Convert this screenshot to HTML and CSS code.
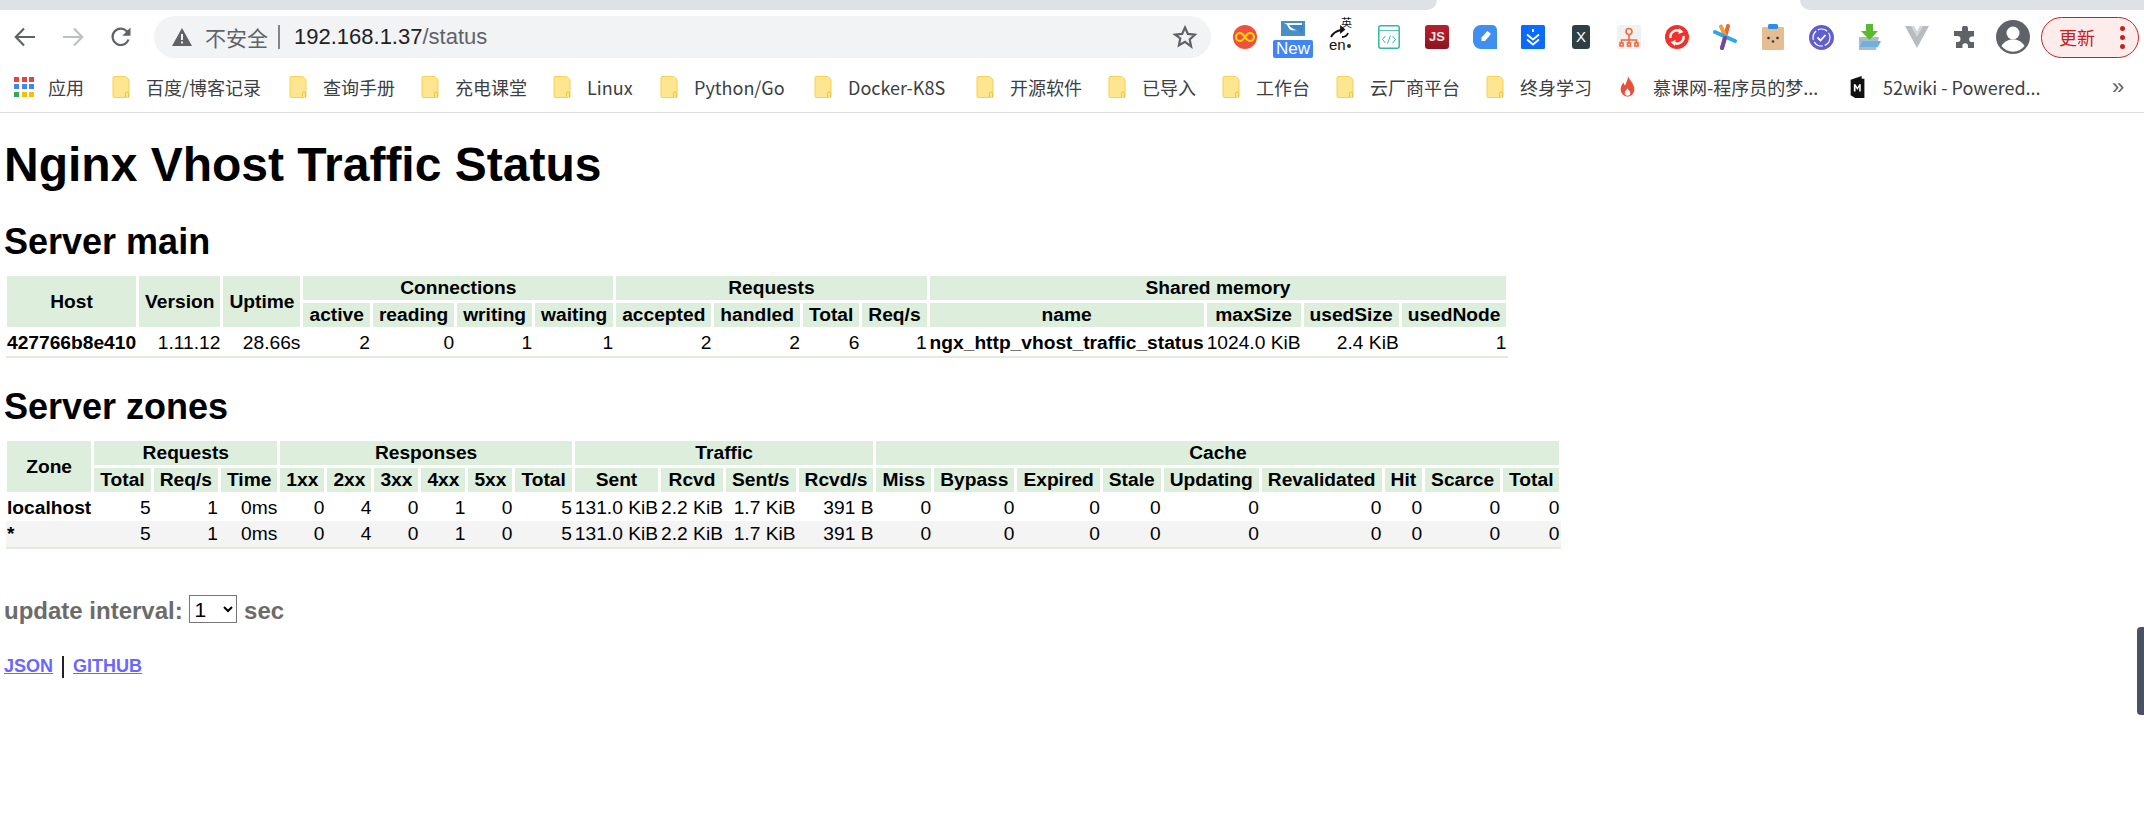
FILE: index.html
```html
<!DOCTYPE html>
<html lang="zh-CN">
<head>
    <meta charset="UTF-8">
    <meta name="viewport" content="width=device-width, initial-scale=1.0">
    <title>Nginx Vhost Traffic Status</title>
    <link rel="stylesheet" href="styles.css">
</head>
<body>
    <svg class="defs" width="0" height="0">
        <symbol id="folder" viewBox="0 0 18 22">
            <path d="M1.5 0.5h12l3.5 3v17a1 1 0 0 1-1 1h-14a1 1 0 0 1-1-1v-19a1 1 0 0 1 .5-1z" fill="#fee58f" stroke="#f8d053"/>
            <path d="M13.5 21.5v-4a1.5 1.5 0 0 1 3 0v4" fill="#fee58f" stroke="#f0c040"/>
        </symbol>
    </svg>

    <!-- tab strip -->
    <div class="tabstrip">
        <div class="tab-left"></div>
        <div class="tab-active"></div>
        <div class="tab-right"></div>
    </div>

    <!-- toolbar -->
    <div class="toolbar">
        <div class="nav-btn">
            <svg width="24" height="24" viewBox="0 0 24 24" fill="none" stroke="#5f6368" stroke-width="2.2"><path d="M22 12H3M11 3.5 2.8 12l8.2 8.5"/></svg>
        </div>
        <div class="nav-btn">
            <svg width="24" height="24" viewBox="0 0 24 24" fill="none" stroke="#bdc1c6" stroke-width="2.2"><path d="M2 12h19M13 3.5l8.2 8.5-8.2 8.5"/></svg>
        </div>
        <div class="nav-btn">
            <svg width="24" height="24" viewBox="0 0 24 24" fill="none"><path d="M19.5 14.5A8.2 8.2 0 1 1 17.8 6.2L20 8.5" stroke="#5f6368" stroke-width="2.2"/><path d="M21.5 2.5v8.2h-8.2z" fill="#5f6368"/></svg>
        </div>
        <div class="omnibox">
            <svg class="warn" width="20" height="18" viewBox="0 0 20 18"><path d="M10 0 20 18H0z" fill="#5f6368"/><path d="M9 6h2v6H9zM9 13.5h2v2H9z" fill="#f1f3f4"/></svg>
            <span class="insecure">不安全</span>
            <span class="divider"></span>
            <span class="url"><span class="host">192.168.1.37</span>/status</span>
            <svg class="star" width="24" height="24" viewBox="0 0 24 24" fill="none" stroke="#5f6368" stroke-width="2.2"><path d="M12 2.5l2.9 6.4 7 .8-5.200 4.700 1.400 6.900L12 16.800l-6.100 3.500 1.400-6.900L2.100 9.700l7-.8z"/></svg>
        </div>
        <div class="extensions">
            <div class="ext">
                <svg width="24" height="24" viewBox="0 0 24 24"><circle cx="12" cy="12" r="12" fill="#f2503f"/><path d="M12 12c-2-3-3.500-4-5-4a4 4 0 0 0 0 8c1.500 0 3-1 5-4s3.500-4 5-4a4 4 0 0 1 0 8c-1.500 0-3-1-5-4z" fill="none" stroke="#ffd60a" stroke-width="2.200"/></svg>
            </div>
            <div class="ext ext-new">
                <svg width="24" height="15" viewBox="0 0 24 15"><rect width="24" height="15" fill="#4a90c8"/><path d="M3 2h18v9c-3-3-8-1-11-2-3-1-2-5-7-7z" fill="#fff"/><path d="M8 4h14v10C18 8 12 10 8 4z" fill="#3f87c4"/></svg>
                <span class="new-badge">New</span>
            </div>
            <div class="ext ext-trans">
                <svg width="26" height="26" viewBox="0 0 26 26" fill="none" stroke="#111" stroke-width="1.800"><path d="M3 13C5 9 8 7 13 6M14 13c3 0 5-1 6-4"/><path d="M13 3l3 2.500-3 2.500z" fill="#111"/><circle cx="21" cy="22" r="2" fill="#333" stroke="none"/></svg>
                <span class="trans-zh">英</span>
                <span class="trans-en">en</span>
            </div>
            <div class="ext">
                <svg width="22" height="24" viewBox="0 0 22 24" fill="none" stroke="#35b6a0" stroke-width="1.500"><rect x=".8" y=".8" width="20.400" height="22.400" rx="2"/><path d="M1 5.500h20" stroke-width=".8"/><path d="M7.500 11l-3 3.500 3 3.500M14.500 11l3 3.500-3 3.500M12.500 10.500l-3 8" stroke-width="1"/></svg>
            </div>
            <div class="ext"><span class="ext-js">JS</span></div>
            <div class="ext">
                <svg width="24" height="24" viewBox="0 0 24 24"><path d="M8 0h11a5 5 0 0 1 5 5v19H8a8 8 0 0 1-8-8V8a8 8 0 0 1 8-8z" fill="#3f8ff0"/><path d="M14.500 6l3.500 3-6 7H8.500v-3.500z" fill="#fff"/></svg>
            </div>
            <div class="ext">
                <svg width="24" height="24" viewBox="0 0 24 24"><rect width="24" height="24" rx="1.500" fill="#0b6bff"/><path d="M12 4v3M6 9.500l6 5 6-5M6 14.500l6 5 6-5" fill="none" stroke="#fff" stroke-width="1.800"/></svg>
            </div>
            <div class="ext"><span class="ext-x">X</span></div>
            <div class="ext">
                <svg width="24" height="24" viewBox="0 0 24 24"><rect width="24" height="24" rx="2" fill="#f1f1f1"/><g fill="none" stroke="#f2683c" stroke-width="1.600"><circle cx="12" cy="6.500" r="3"/><path d="M12 9.500V15M4.500 18v-3h15v3M12 15v3"/><rect x="3" y="18" width="3" height="3"/><rect x="10.500" y="18" width="3" height="3"/><rect x="18" y="18" width="3" height="3"/></g></svg>
            </div>
            <div class="ext">
                <svg width="24" height="24" viewBox="0 0 24 24"><circle cx="12" cy="12" r="12" fill="#f0322d"/><path d="M5.500 13a6.500 6.500 0 0 1 10-6.500M18.500 11a6.500 6.500 0 0 1-10 6.500" fill="none" stroke="#fff" stroke-width="2.400"/><path d="M14 3l4.500 4-5 2zM10 21l-4.500-4 5-2z" fill="#fff"/></svg>
            </div>
            <div class="ext">
                <svg width="24" height="26" viewBox="0 0 24 26" stroke-width="4" stroke-linecap="round"><path d="M15 2 9 24" stroke="#e8663a"/><path d="M8 2.500 13 14" stroke="#f0a030"/><path d="M2 8l20 9" stroke="#2fa8e8"/><path d="M9 24l3-10" stroke="#6a4aa8"/></svg>
            </div>
            <div class="ext">
                <svg width="22" height="26" viewBox="0 0 22 26"><rect y="3" width="22" height="23" rx="1" fill="#e5bd93"/><rect x="6" width="10" height="5" rx="1.500" fill="#2f8fe8"/><circle cx="6.500" cy="14" r="1.300" fill="#333"/><circle cx="15.500" cy="14" r="1.300" fill="#333"/><circle cx="11" cy="17.500" r="1.200" fill="#333"/></svg>
            </div>
            <div class="ext">
                <svg width="25" height="25" viewBox="0 0 25 25"><circle cx="12.500" cy="12.500" r="12.500" fill="#5f5fd0"/><circle cx="12.500" cy="12.500" r="8.500" fill="none" stroke="#fff" stroke-width="1.200" stroke-dasharray="10 2"/><path d="M8.500 12.500l3 3 5-5.500" fill="none" stroke="#fff" stroke-width="1.800"/></svg>
            </div>
            <div class="ext">
                <svg width="24" height="26" viewBox="0 0 24 26"><path d="M2 13h20l-3 13H2z" fill="#a8bccc"/><path d="M5 17h19l-3 6H3z" fill="#6fb0e0"/><path d="M9 0h7v7h5l-8.500 9L4 7h5z" fill="#5cb82e"/></svg>
            </div>
            <div class="ext">
                <svg width="24" height="22" viewBox="0 0 24 22"><path d="M0 0h9l3 6 3-6h9L12 22z" fill="#b8bcbf"/><path d="M6 0h3l3 6 3-6h3l-6 11z" fill="#d4d6d8"/></svg>
            </div>
            <div class="ext">
                <svg width="22" height="22" viewBox="0 0 22 22"><path d="M8 2.500a3 3 0 0 1 6 0V5h6v5.500h-2a2.800 2.800 0 0 0 0 5.600h2V22h-6v-2a2.800 2.800 0 0 0-5.600 0v2H2v-6h1.500a3 3 0 0 0 0-6H0V5h8z" fill="#5f6368"/></svg>
            </div>
            <div class="ext">
                <svg width="34" height="34" viewBox="0 0 34 34"><circle cx="17" cy="17" r="17" fill="#5f6368"/><circle cx="17" cy="13" r="6.500" fill="#fff"/><path d="M5.500 26c3-5 7-6.500 11.500-6.500s8.500 1.500 11.500 6.500a14.500 14.500 0 0 1-23 0z" fill="#fff"/></svg>
            </div>
        </div>
        <div class="update-btn">
            <span class="update-label">更新</span>
            <span class="update-dots"><i></i><i></i><i></i></span>
        </div>
    </div>

    <!-- bookmarks -->
    <div class="bookmarks">
        <div class="bm bm-apps">
            <span class="apps-grid"><i class="r"></i><i class="r"></i><i class="r"></i><i class="b"></i><i class="b"></i><i class="b"></i><i class="g"></i><i class="y"></i><i class="y"></i></span>
            <span>应用</span>
        </div>
        <div class="bm"><svg class="folder"><use href="#folder"/></svg><span>百度/博客记录</span></div>
        <div class="bm"><svg class="folder"><use href="#folder"/></svg><span>查询手册</span></div>
        <div class="bm"><svg class="folder"><use href="#folder"/></svg><span>充电课堂</span></div>
        <div class="bm"><svg class="folder"><use href="#folder"/></svg><span>Linux</span></div>
        <div class="bm"><svg class="folder"><use href="#folder"/></svg><span>Python/Go</span></div>
        <div class="bm"><svg class="folder"><use href="#folder"/></svg><span>Docker-K8S</span></div>
        <div class="bm"><svg class="folder"><use href="#folder"/></svg><span>开源软件</span></div>
        <div class="bm"><svg class="folder"><use href="#folder"/></svg><span>已导入</span></div>
        <div class="bm"><svg class="folder"><use href="#folder"/></svg><span>工作台</span></div>
        <div class="bm"><svg class="folder"><use href="#folder"/></svg><span>云厂商平台</span></div>
        <div class="bm"><svg class="folder"><use href="#folder"/></svg><span>终身学习</span></div>
        <div class="bm">
            <svg class="folder" viewBox="0 0 18 24"><path d="M9 0c1 4 7 8 7 15a7.500 7.500 0 0 1-15 0c0-3 1-6 3.500-8 0 2 .5 3 1.500 3 1-3 3-6 3-10z" fill="#e8503a"/><path d="M8.500 13c0 2 3 3 3 5.500a3 3 0 0 1-6 0c0-2.500 2.500-3.500 3-5.500z" fill="#fff"/></svg>
            <span>慕课网-程序员的梦...</span>
        </div>
        <div class="bm">
            <svg class="folder" viewBox="0 0 18 24"><path d="M1 4l12-4v3h3v21H6l-5-3z" fill="#111"/><path d="M4.500 9h1.800l2 3.500 2-3.500h1.700v8h-1.700v-5l-2 3.300-2-3.300v5H4.500z" fill="#fff"/></svg>
            <span>52wiki - Powered...</span>
        </div>
        <div class="bm-more">»</div>
    </div>

    <!-- page -->
    <div class="page">
        <h1>Nginx Vhost Traffic Status</h1>

        <h2>Server main</h2>
        <table>
            <thead>
                <tr>
                    <th rowspan="2">Host</th>
                    <th rowspan="2">Version</th>
                    <th rowspan="2">Uptime</th>
                    <th colspan="4">Connections</th>
                    <th colspan="4">Requests</th>
                    <th colspan="4">Shared memory</th>
                </tr>
                <tr>
                    <th>active</th><th>reading</th><th>writing</th><th>waiting</th>
                    <th>accepted</th><th>handled</th><th>Total</th><th>Req/s</th>
                    <th>name</th><th>maxSize</th><th>usedSize</th><th>usedNode</th>
                </tr>
            </thead>
            <tbody>
                <tr>
                    <td class="name">427766b8e410</td>
                    <td>1.11.12</td><td>28.66s</td>
                    <td>2</td><td>0</td><td>1</td><td>1</td>
                    <td>2</td><td>2</td><td>6</td><td>1</td>
                    <td class="name">ngx_http_vhost_traffic_status</td>
                    <td>1024.0 KiB</td><td>2.4 KiB</td><td>1</td>
                </tr>
            </tbody>
        </table>

        <h2>Server zones</h2>
        <table>
            <thead>
                <tr>
                    <th rowspan="2">Zone</th>
                    <th colspan="3">Requests</th>
                    <th colspan="6">Responses</th>
                    <th colspan="4">Traffic</th>
                    <th colspan="9">Cache</th>
                </tr>
                <tr>
                    <th>Total</th><th>Req/s</th><th>Time</th>
                    <th>1xx</th><th>2xx</th><th>3xx</th><th>4xx</th><th>5xx</th><th>Total</th>
                    <th>Sent</th><th>Rcvd</th><th>Sent/s</th><th>Rcvd/s</th>
                    <th>Miss</th><th>Bypass</th><th>Expired</th><th>Stale</th><th>Updating</th><th>Revalidated</th><th>Hit</th><th>Scarce</th><th>Total</th>
                </tr>
            </thead>
            <tbody>
                <tr>
                    <td class="name">localhost</td>
                    <td>5</td><td>1</td><td>0ms</td>
                    <td>0</td><td>4</td><td>0</td><td>1</td><td>0</td><td>5</td>
                    <td>131.0 KiB</td><td>2.2 KiB</td><td>1.7 KiB</td><td>391 B</td>
                    <td>0</td><td>0</td><td>0</td><td>0</td><td>0</td><td>0</td><td>0</td><td>0</td><td>0</td>
                </tr>
                <tr class="odd">
                    <td class="name">*</td>
                    <td>5</td><td>1</td><td>0ms</td>
                    <td>0</td><td>4</td><td>0</td><td>1</td><td>0</td><td>5</td>
                    <td>131.0 KiB</td><td>2.2 KiB</td><td>1.7 KiB</td><td>391 B</td>
                    <td>0</td><td>0</td><td>0</td><td>0</td><td>0</td><td>0</td><td>0</td><td>0</td><td>0</td>
                </tr>
            </tbody>
        </table>

        <div class="interval">
            <label for="interval-select">update interval:</label>
            <select id="interval-select">
                <option>1</option>
                <option>2</option>
                <option>5</option>
            </select>
            <span>sec</span>
        </div>

        <div class="links">
            <a href="#">JSON</a>
            <span class="sep"></span>
            <a href="#">GITHUB</a>
        </div>
    </div>

    <div class="side-widget"></div>
</body>
</html>
```

FILE: styles.css
```css
html, body {
    margin: 0;
    padding: 0;
    height: 100%;
    overflow: hidden;
}
body {
    background: #fff;
    color: #000;
    font-family: "Liberation Sans", "Noto Sans CJK SC", sans-serif;
    font-size: 24px;
}
.defs {
    position: absolute;
}

/* tab strip */
.tabstrip {
    display: flex;
    height: 10px;
}
.tab-left, .tab-right {
    background: #dee1e6;
}
.tab-left {
    width: 1437px;
    border-bottom-right-radius: 10px;
}
.tab-active {
    width: 363px;
}
.tab-right {
    flex: 1;
    border-bottom-left-radius: 10px;
}

/* toolbar */
.toolbar {
    display: flex;
    align-items: center;
    height: 54px;
    padding: 0 5px 0 1px;
}
.nav-btn {
    width: 48px;
    display: flex;
    justify-content: center;
}
.omnibox {
    flex: 1;
    height: 42px;
    margin: 0 10px 0 9px;
    padding: 0 14px 0 18px;
    display: flex;
    align-items: center;
    background: #f1f3f4;
    border-radius: 21px;
}
.insecure {
    margin-left: 13px;
    font-size: 21px;
    color: #5f6368;
    font-family: "Noto Sans CJK SC", sans-serif;
}
.divider {
    width: 2px;
    height: 24px;
    margin: 0 14px 0 10px;
    background: #80868b;
}
.url {
    flex: 1;
    font-size: 22px;
    color: #5f6368;
}
.host {
    color: #202124;
}
.extensions {
    display: flex;
    align-items: center;
}
.ext {
    position: relative;
    width: 48px;
    height: 42px;
    display: flex;
    align-items: center;
    justify-content: center;
}
.ext-new svg {
    margin-bottom: 17px;
}
.new-badge {
    position: absolute;
    left: 4px;
    top: 24px;
    width: 40px;
    height: 18px;
    background: #4285f4;
    border-radius: 2px;
    color: #fff;
    font-size: 17px;
    line-height: 18px;
    text-align: center;
}
.trans-zh {
    position: absolute;
    left: 24px;
    top: 1px;
    font-size: 11px;
    line-height: 12px;
    color: #111;
}
.trans-en {
    position: absolute;
    left: 12px;
    top: 21px;
    font-size: 15px;
    line-height: 16px;
    color: #111;
}
.ext-js {
    width: 24px;
    height: 24px;
    background: linear-gradient(#b8202c, #8c1420);
    border-radius: 3px;
    color: #f4e0e0;
    font-size: 13px;
    font-weight: bold;
    line-height: 24px;
    text-align: center;
}
.ext-x {
    width: 18px;
    height: 24px;
    background: #2f3f46;
    border-radius: 3px;
    color: #fff;
    font-size: 15px;
    line-height: 24px;
    text-align: center;
}
.update-btn {
    width: 98px;
    height: 41px;
    margin-left: 4px;
    box-sizing: border-box;
    display: flex;
    align-items: center;
    justify-content: space-between;
    padding: 0 13px 0 17px;
    background: #fceceb;
    border: 1.5px solid #c5221f;
    border-radius: 21px;
}
.update-label {
    font-size: 18px;
    color: #c5221f;
    font-family: "Noto Sans CJK SC", sans-serif;
}
.update-dots {
    display: flex;
    flex-direction: column;
    gap: 4px;
}
.update-dots i {
    width: 5px;
    height: 5px;
    background: #c5221f;
    border-radius: 50%;
}

/* bookmarks */
.bookmarks {
    display: grid;
    grid-template-columns: 98px 177px 132px 132px 107px 154px 162px 132px 114px 114px 150px 133px 230px 263px 1fr;
    align-items: center;
    height: 45px;
    padding: 0 0 3px 14px;
    border-bottom: 1px solid #dadce0;
    box-sizing: content-box;
}
.bm {
    display: flex;
    align-items: center;
    gap: 16px;
    font-size: 18px;
    color: #3c4043;
    font-family: "Noto Sans CJK SC", "Liberation Sans", sans-serif;
    white-space: nowrap;
}
.bm-apps {
    gap: 14px;
}
.folder {
    width: 18px;
    height: 22px;
    flex: none;
}
.apps-grid {
    display: grid;
    grid-template-columns: repeat(3, 5px);
    gap: 2.5px;
}
.apps-grid i {
    height: 5px;
}
.apps-grid .r { background: #ea4335; }
.apps-grid .b { background: #4285f4; }
.apps-grid .g { background: #34a853; }
.apps-grid .y { background: #fbbc05; }
.bm-more {
    font-size: 22px;
    color: #5f6368;
}

/* page */
.page {
    padding: 0 4px;
}
h1 {
    margin: 24px 0 2px;
    font-size: 48px;
    line-height: 56px;
}
h2 {
    margin: 29px 0 11px;
    font-size: 36px;
    line-height: 40px;
}
table {
    border-collapse: collapse;
    font-size: 19.2px;
    border-bottom: 2px solid #ddeedd;
}
th {
    background: #ddeedd;
    border: 3px solid #fff;
    padding: 0 6px;
    height: 24px;
    line-height: 22px;
    font-weight: bold;
}
td {
    padding: 2px 1.5px;
    line-height: 22px;
    text-align: right;
}
td.name {
    text-align: left;
    font-weight: bold;
}
tr.odd td {
    background: #f4f4f4;
}
.interval {
    margin-top: 46px;
    color: #6b6b6b;
    font-weight: bold;
    line-height: 30px;
}
.interval select {
    width: 48px;
    height: 28px;
    font-family: "Liberation Sans", sans-serif;
    font-size: 21px;
    vertical-align: 2px;
    background: #fff;
}
.links {
    margin-top: 30px;
    display: flex;
    align-items: center;
    gap: 9px;
    font-size: 18px;
    font-weight: bold;
}
.links a {
    color: #6a66ff;
}
.sep {
    width: 2px;
    height: 22px;
    background: #222;
}
.side-widget {
    position: fixed;
    right: 0;
    top: 627px;
    width: 7px;
    height: 88px;
    background: #4a5160;
    border-radius: 4px 0 0 4px;
}
```
